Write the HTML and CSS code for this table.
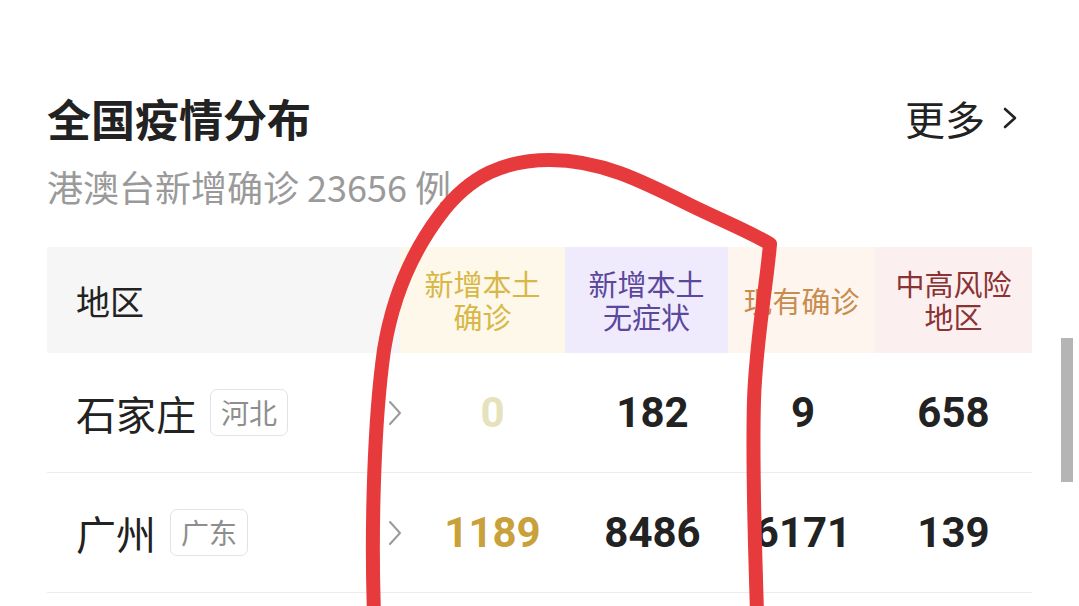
FILE: index.html
```html
<!DOCTYPE html>
<html lang="zh-CN">
<head>
<meta charset="utf-8">
<title>全国疫情分布</title>
<link rel="stylesheet" href="styles.css">
</head>
<body>
<div class="page">
  <div class="head">
    <h1 class="title">全国疫情分布</h1>
    <a class="more">更多<svg class="more-icon" viewBox="0 0 18 24" width="18" height="24"><polyline points="4,3 14,12 4,21" fill="none" stroke="#222" stroke-width="2.6" stroke-linecap="round" stroke-linejoin="round"/></svg></a>
  </div>
  <p class="sub">港澳台新增确诊 23656 例</p>

  <div class="table">
    <div class="hrow">
      <div class="hc hc-area">地区</div>
      <div class="hc hc-yellow"><span>新增本土</span><span>确诊</span></div>
      <div class="hc hc-purple"><span>新增本土</span><span>无症状</span></div>
      <div class="hc hc-orange"><span>现有确诊</span></div>
      <div class="hc hc-red"><span>中高风险</span><span>地区</span></div>
    </div>

    <div class="row">
      <div class="c-area">
        <span class="name">石家庄</span><span class="tag">河北</span>
        <svg class="chev" viewBox="0 0 14 26" width="14" height="26"><polyline points="2,2 12,13 2,24" fill="none" stroke="#9a9a9a" stroke-width="2" stroke-linecap="round" stroke-linejoin="round"/></svg>
      </div>
      <div class="num n-yellow zero">0</div>
      <div class="num n-purple">182</div>
      <div class="num n-orange">9</div>
      <div class="num n-red">658</div>
    </div>

    <div class="row">
      <div class="c-area">
        <span class="name">广州</span><span class="tag">广东</span>
        <svg class="chev" viewBox="0 0 14 26" width="14" height="26"><polyline points="2,2 12,13 2,24" fill="none" stroke="#9a9a9a" stroke-width="2" stroke-linecap="round" stroke-linejoin="round"/></svg>
      </div>
      <div class="num n-yellow gold">1189</div>
      <div class="num n-purple">8486</div>
      <div class="num n-orange">6171</div>
      <div class="num n-red">139</div>
    </div>
  </div>
</div>

<div class="scrollbar"></div>

<svg class="mark" viewBox="0 0 1079 606" width="1079" height="606">
  <path d="M 374 614 C 371 530, 374 420, 384 350 C 392 300, 410 255, 440 215 C 470 175, 505 160, 550 160 C 600 160, 640 180, 690 205 C 725 222, 750 232, 770 244 C 766 290, 756 340, 754 400 C 752 470, 755 540, 757 614" fill="none" stroke="#e63a3d" stroke-width="14" stroke-linecap="round" stroke-linejoin="round"/>
</svg>
</body>
</html>
```

FILE: styles.css
```css
* { box-sizing: border-box; }

html, body {
  margin: 0;
  padding: 0;
  background: #ffffff;
}

body {
  width: 1079px;
  height: 606px;
  overflow: hidden;
  position: relative;
  font-family: "Noto Sans CJK SC", "Noto Sans", sans-serif;
  color: #222222;
}

.page {
  padding: 92px 47px 0 47px;
}

.head {
  display: flex;
  justify-content: space-between;
  align-items: center;
}

.title {
  margin: 0;
  font-size: 44px;
  line-height: 52px;
  font-weight: 700;
  color: #222222;
}

.more {
  display: flex;
  align-items: center;
  gap: 16px;
  margin-right: 13px;
  font-size: 40px;
  line-height: 52px;
  color: #222222;
}

.more-icon { display: block; }

.sub {
  margin: 20px 0 0 0;
  font-size: 36px;
  line-height: 44px;
  color: #9a9a9a;
}

.table {
  margin-top: 39px;
}

.hrow,
.row {
  display: grid;
  grid-template-columns: 353px 165px 163px 147px 157px;
}

.hrow {
  height: 106px;
}

.hc {
  display: flex;
  flex-direction: column;
  align-items: center;
  justify-content: center;
  text-align: center;
  font-size: 29px;
  line-height: 33px;
}

.hc span {
  display: block;
  height: 33px;
}

.hc-area {
  align-items: flex-start;
  padding-left: 29px;
  font-size: 34px;
  background: #f6f6f6;
  color: #222222;
}

.hc-yellow { background: #fdf8e9; color: #d8b746; }
.hc-purple { background: #efeafc; color: #5b479c; }
.hc-orange { background: #fdf5ee; color: #c98c4f; }
.hc-red    { background: #fcefef; color: #8a3333; }

.row {
  height: 120px;
  border-bottom: 1px solid #ececec;
}

.c-area {
  display: flex;
  align-items: center;
  padding-left: 29px;
}

.name {
  font-size: 40px;
  line-height: 48px;
  color: #222222;
}

.tag {
  margin-left: 14px;
  height: 47px;
  padding: 0 10px;
  border: 1px solid #e3e3e3;
  border-radius: 7px;
  font-size: 28px;
  line-height: 45px;
  color: #8e8e8e;
}

.chev {
  display: block;
  margin-left: auto;
  margin-right: -2px;
}

.num {
  display: flex;
  align-items: center;
  justify-content: center;
  font-family: Roboto, "Noto Sans", sans-serif;
  font-weight: 700;
  font-size: 42px;
  color: #222222;
}

.n-yellow { padding-left: 20px; }
.n-purple { padding-left: 12px; }
.n-orange { padding-left: 3px; }

.zero { color: #e5e2bd; }
.gold { color: #c9a13a; }

.scrollbar {
  position: absolute;
  left: 1061px;
  top: 338px;
  width: 12px;
  height: 144px;
  background: #b5b5b5;
}

.mark {
  position: absolute;
  left: 0;
  top: 0;
  pointer-events: none;
}
```
